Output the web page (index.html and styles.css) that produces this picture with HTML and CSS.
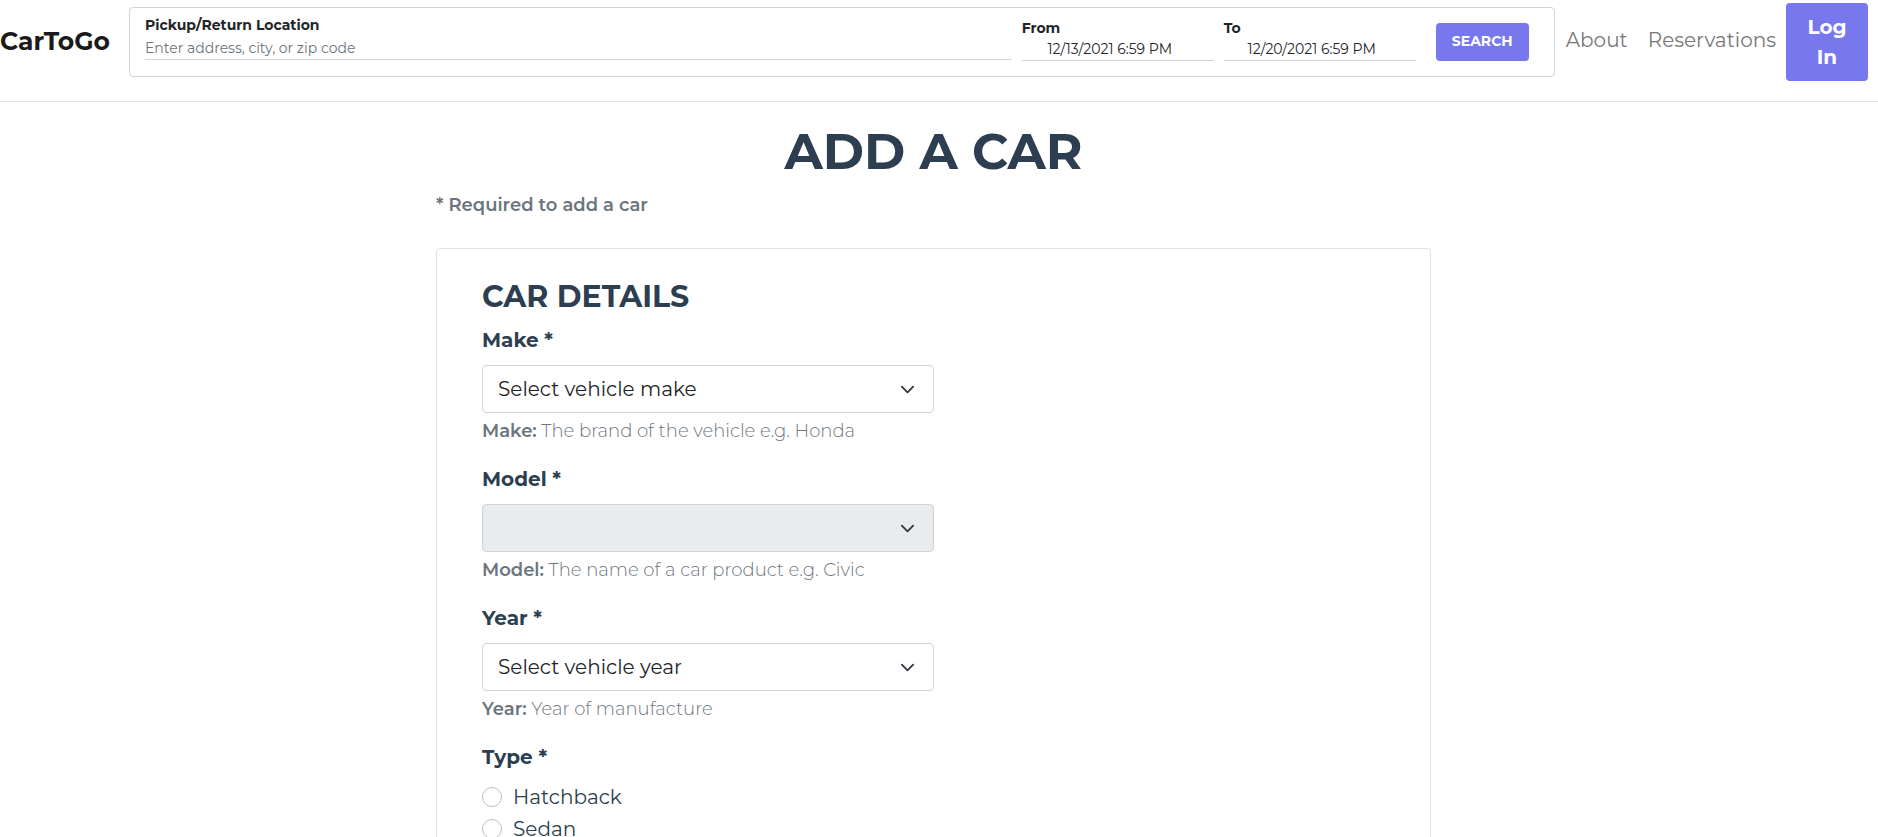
FILE: index.html
```html
<!DOCTYPE html>
<html lang="en">
<head>
<meta charset="utf-8">
<title>CarToGo</title>
<link rel="stylesheet" href="styles.css">
</head>
<body>
<header class="navbar">
  <a class="brand" href="#">CarToGo</a>
  <form class="search">
    <div class="search-field search-location">
      <label for="location">Pickup/Return Location</label>
      <input id="location" type="text" placeholder="Enter address, city, or zip code">
    </div>
    <div class="search-field search-date">
      <label for="from">From</label>
      <input id="from" type="text" value="12/13/2021 6:59 PM">
    </div>
    <div class="search-field search-date">
      <label for="to">To</label>
      <input id="to" type="text" value="12/20/2021 6:59 PM">
    </div>
    <button class="search-button" type="button">SEARCH</button>
  </form>
  <nav class="links">
    <a href="#">About</a>
    <a href="#">Reservations</a>
  </nav>
  <button class="login" type="button">Log In</button>
</header>
<main class="page">
  <h1>ADD A CAR</h1>
  <p class="required">* Required to add a car</p>
  <form class="card">
    <h2>CAR DETAILS</h2>
    <div class="field">
      <label class="field-label" for="make">Make *</label>
      <div class="select-wrap">
        <select id="make"><option>Select vehicle make</option></select>
        <svg class="chevron" viewBox="0 0 16 16" aria-hidden="true"><path d="M2 5l6 6 6-6"/></svg>
      </div>
      <p class="help"><b>Make:</b> The brand of the vehicle e.g. Honda</p>
    </div>
    <div class="field">
      <label class="field-label" for="model">Model *</label>
      <div class="select-wrap">
        <select id="model" disabled></select>
        <svg class="chevron" viewBox="0 0 16 16" aria-hidden="true"><path d="M2 5l6 6 6-6"/></svg>
      </div>
      <p class="help"><b>Model:</b> The name of a car product e.g. Civic</p>
    </div>
    <div class="field">
      <label class="field-label" for="year">Year *</label>
      <div class="select-wrap">
        <select id="year"><option>Select vehicle year</option></select>
        <svg class="chevron" viewBox="0 0 16 16" aria-hidden="true"><path d="M2 5l6 6 6-6"/></svg>
      </div>
      <p class="help"><b>Year:</b> Year of manufacture</p>
    </div>
    <fieldset class="types">
      <legend class="field-label">Type *</legend>
      <label class="radio"><input type="radio" name="type">Hatchback</label>
      <label class="radio"><input type="radio" name="type">Sedan</label>
    </fieldset>
  </form>
</main>
</body>
</html>
```
FILE: styles.css
```css
* { box-sizing: border-box; }

html { height: 100%; overflow: hidden; }

body {
  margin: 0;
  height: 100%;
  overflow: hidden;
  background: #fff;
  color: #212529;
  font-family: Montserrat, Inter, "Open Sans", sans-serif;
  font-size: 20px;
  font-weight: 400;
  line-height: 30px;
}

input, select, button { font: inherit; color: inherit; }

.navbar {
  display: flex;
  align-items: flex-start;
  padding: 3px 10px 20px 0;
  border-bottom: 1px solid #dee2e6;
}

.brand {
  flex: none;
  width: 129px;
  padding-top: 23px;
  color: #1a1a1a;
  font-size: 25px;
  font-weight: 700;
  text-decoration: none;
}

.search {
  display: flex;
  flex: 1;
  gap: 10px;
  margin-top: 4px;
  height: 70px;
  padding: 7px 25px 0 15px;
  border: 1px solid #ced4da;
  border-radius: 4px;
}

.search-field {
  display: flex;
  flex-direction: column;
  font-size: 14px;
  line-height: 20px;
}

.search-field label { font-weight: 700; }

.search-field input {
  width: 100%;
  height: 25px;
  padding: 2px 0 0;
  border: 0;
  border-bottom: 1px solid #ced4da;
  background: transparent;
  outline: 0;
}

.search-field input::placeholder { color: #6c757d; opacity: 1; }

.search-location { flex: 1; }

.search-date { width: 192px; padding-top: 3px; }

.search-date input {
  height: 23px;
  padding: 0 16px 0 0;
  text-align: center;
}

.search-button {
  width: 93px;
  height: 38px;
  margin: 8px 0 0 10px;
  padding: 0 0 2px;
  border: 0;
  border-radius: 4px;
  background: #7777ee;
  color: #fff;
  font-size: 14px;
  font-weight: 700;
  line-height: 20px;
}

.links {
  display: flex;
  gap: 20px;
  padding: 22px 10px 0 11px;
}

.links a { color: #777; text-decoration: none; }

.login {
  width: 82px;
  padding: 9px 20px;
  border: 0;
  border-radius: 4px;
  background: #7777ee;
  color: #fff;
  font-weight: 700;
}

.page {
  max-width: 1006px;
  margin: 0 auto;
  padding-right: 11px;
}

h1 {
  margin: 0;
  padding-top: 20px;
  color: #2c3e50;
  font-size: 50px;
  font-weight: 700;
  line-height: 60px;
  text-align: center;
}

.required {
  margin: 10px 0 30px;
  color: #6c757d;
  font-size: 18px;
  font-weight: 600;
  line-height: 26px;
}

.card {
  padding: 29px 45px;
  border: 1px solid #dee2e6;
  border-radius: 4px;
  color: #2c3e50;
}

h2 {
  margin: 0 0 9px;
  font-size: 30px;
  font-weight: 700;
  line-height: 38px;
}

.field { width: 50%; margin-bottom: 20px; }

.field-label {
  display: block;
  padding: 0;
  margin-bottom: 10px;
  font-weight: 700;
}

.select-wrap { display: grid; align-items: center; }

.select-wrap > * { grid-area: 1 / 1; }

.select-wrap select {
  appearance: none;
  width: 100%;
  height: 48px;
  padding: 0 48px 0 15px;
  border: 1px solid #ced4da;
  border-radius: 4px;
  background: #fff;
  color: #212529;
}

.select-wrap select:disabled { background: #e9ecef; opacity: 1; }

.chevron {
  justify-self: end;
  width: 15px;
  height: 15px;
  margin-right: 19px;
  fill: none;
  stroke: #343a40;
  stroke-width: 2;
  stroke-linecap: round;
  stroke-linejoin: round;
  pointer-events: none;
}

.help {
  margin: 5px 0 0;
  color: #6c757d;
  font-size: 18px;
  font-weight: 300;
  line-height: 26px;
}

.help b { font-weight: 600; }

.types { margin: 0; padding: 0; border: 0; }

.radio {
  display: flex;
  align-items: center;
  gap: 11px;
  margin-bottom: 2px;
}

.radio input {
  appearance: none;
  width: 20px;
  height: 20px;
  margin: 0;
  border: 1px solid #bfbfbf;
  border-radius: 50%;
  background: #fff;
}
```
